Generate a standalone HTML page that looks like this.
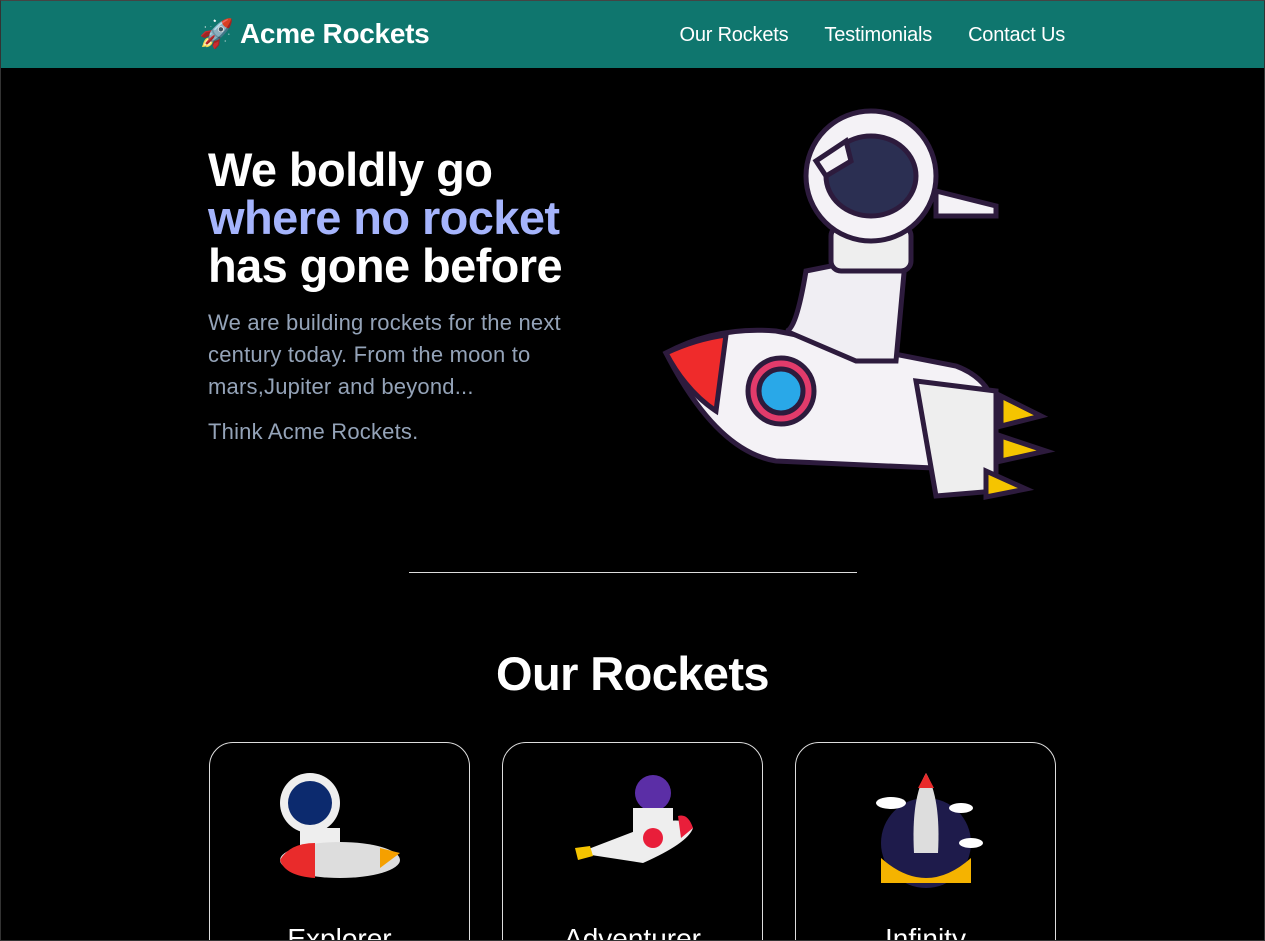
<!DOCTYPE html>
<html><head><meta charset="utf-8"><style>
*{margin:0;padding:0;box-sizing:border-box}
html,body{width:1265px;height:941px;overflow:hidden;background:#000;font-family:"Liberation Sans",sans-serif;color:#fff}
#w{position:relative;width:1265px;height:941px;overflow:hidden;border:1px solid #333;border-top:1px solid #444}
nav{position:absolute;left:0;top:0;width:1263px;height:67px;background:#0f766e;}
.logo{position:absolute;left:198px;top:16px;font-size:28px;font-weight:bold;letter-spacing:-0.3px}
.links{position:absolute;right:199px;top:23px;font-size:20px;letter-spacing:-0.2px}
.links span{margin-left:36px}
h1{position:absolute;left:207px;top:145px;font-size:47px;line-height:48px;font-weight:bold;letter-spacing:-0.6px}
h1 .b{color:#a5b4fc}
.p1{position:absolute;left:207px;top:306px;width:400px;font-size:22px;line-height:32px;color:#94a3b8;letter-spacing:0.2px}
.p2{position:absolute;left:207px;top:418px;font-size:22px;color:#94a3b8;letter-spacing:0.2px}
hr{position:absolute;left:408px;top:571px;width:448px;border:0;border-top:1px solid #ddd}
h2{position:absolute;left:0;width:1263px;text-align:center;top:645px;font-size:47px;font-weight:bold;letter-spacing:-0.6px}
.card{position:absolute;top:741px;width:261px;height:240px;border:1px solid #ddd;border-radius:24px}
.card .t{position:absolute;top:180px;width:100%;text-align:center;font-size:28px}
.card svg{position:absolute;left:60px;top:25px}
</style></head><body><div id="w">
<nav><div class="logo">🚀 Acme Rockets</div><div class="links"><span>Our Rockets</span><span>Testimonials</span><span>Contact Us</span></div></nav>
<h1>We boldly go<br><span class="b">where no rocket</span><br>has gone before</h1>
<div class="p1">We are building rockets for the next century today. From the moon to mars,Jupiter and beyond...</div>
<div class="p2">Think Acme Rockets.</div>
<svg style="position:absolute;left:655px;top:90px" width="400" height="415" viewBox="0 0 400 415">
<g stroke="#2d1b3d" stroke-width="5">
<path d="M10 262 Q60 235 120 240 L300 275 Q340 290 340 330 Q340 370 300 378 L120 370 Q60 360 10 262Z" fill="#f4f2f6"/>
<path d="M10 262 Q40 248 70 244 L60 320 Q30 300 10 262Z" fill="#ef2b2b"/>
<circle cx="125" cy="300" r="33" fill="#e23b6b"/><circle cx="125" cy="300" r="22" fill="#29a8e8"/>
<path d="M260 290 L340 300 L340 400 L280 405 Z" fill="#eee"/>
<path d="M345 305 l40 20 -40 10z M345 345 l45 15 -45 10z M330 380 l40 18 -40 8z" fill="#f5c400"/>
<path d="M150 180 Q140 240 130 240 L200 270 L240 270 L250 160 Z" fill="#f0eef3"/>
<rect x="175" y="135" width="80" height="45" rx="10" fill="#eee"/>
<circle cx="215" cy="85" r="65" fill="#f4f2f6"/>
<ellipse cx="215" cy="85" rx="45" ry="40" fill="#2b2f52"/>
<path d="M160 70 L190 50 L195 70 L170 85 Z" fill="#f4f2f6"/>
<path d="M280 100 L340 115 L340 125 L280 125 Z" fill="#f4f2f6"/>
</g></svg>
<hr>
<h2>Our Rockets</h2>
<div class="card" style="left:208px"><svg width="140" height="120"><circle cx="40" cy="35" r="30" fill="#eee"/><circle cx="40" cy="35" r="22" fill="#0c2a6e"/><rect x="30" y="60" width="40" height="30" fill="#eee"/><ellipse cx="70" cy="92" rx="60" ry="18" fill="#ddd"/><path d="M10 92 Q20 75 45 75 L45 110 Q15 108 10 92Z" fill="#e92b2b"/><path d="M130 85 l-20 -5 0 20z" fill="#f5a000"/></svg><div class="t">Explorer</div></div>
<div class="card" style="left:501px"><svg width="140" height="120"><circle cx="90" cy="25" r="18" fill="#5b2ea6"/><rect x="70" y="40" width="40" height="30" fill="#eee"/><path d="M15 85 L80 60 Q120 45 130 60 Q125 75 80 95Z" fill="#eee"/><path d="M130 60 Q125 45 115 48 L118 70Z" fill="#e91e3a"/><circle cx="90" cy="70" r="10" fill="#e91e3a"/><path d="M12 80 l15 -2 3 10 -15 4z" fill="#f5c400"/></svg><div class="t">Adventurer</div></div>
<div class="card" style="left:794px"><svg width="140" height="125"><circle cx="70" cy="75" r="45" fill="#1e1b4b"/><path d="M25 90 Q70 130 115 90 L115 115 L25 115Z" fill="#f5b300"/><path d="M70 5 Q85 30 82 85 L58 85 Q55 30 70 5Z" fill="#ddd"/><path d="M70 5 L78 20 L62 20Z" fill="#e92b2b"/><ellipse cx="35" cy="35" rx="15" ry="6" fill="#fff"/><ellipse cx="105" cy="40" rx="12" ry="5" fill="#fff"/><ellipse cx="115" cy="75" rx="12" ry="5" fill="#fff"/></svg><div class="t">Infinity</div></div>
</div></body></html>
